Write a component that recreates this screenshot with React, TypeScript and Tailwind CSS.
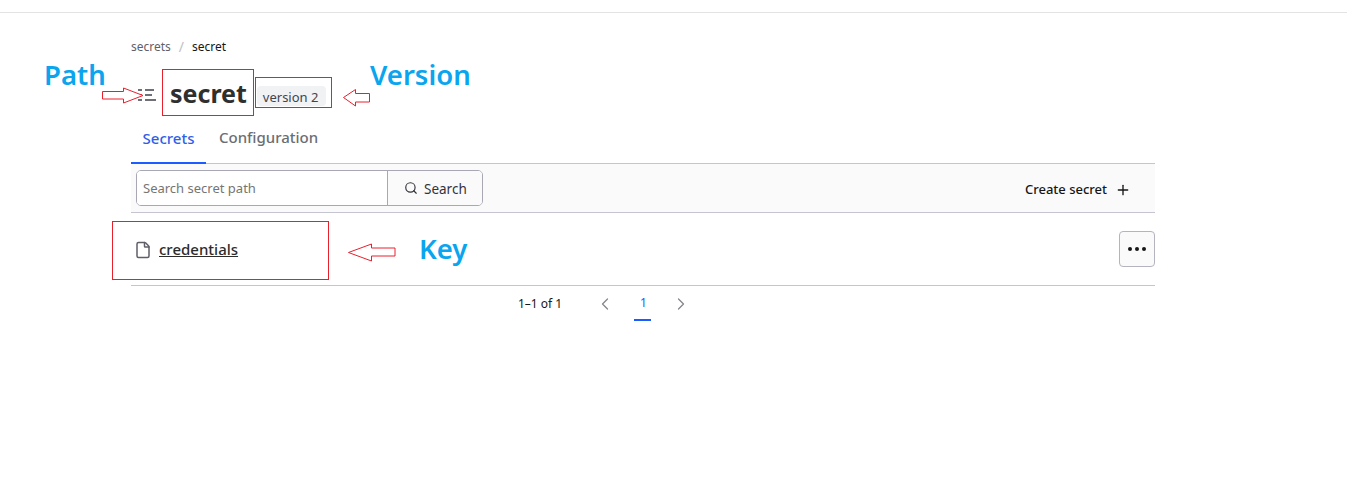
import { ChevronLeft, ChevronRight, File, Plus, Search } from "lucide-react";

const Arrow = ({ className, points, w, h }: { className: string; points: string; w: number; h: number }) => (
  <svg className={`absolute ${className}`} width={w} height={h} viewBox={`0 0 ${w} ${h}`}>
    <polygon points={points} fill="#fff" stroke="#e8202c" strokeWidth="1" />
  </svg>
);

const PathIcon = () => (
  <svg className="mt-[4px]" width="18" height="14" viewBox="0 0 18 14" fill="none" stroke="#6f6f78" strokeWidth="2">
    <path d="M0 2h4M0 7h4M0 12h4M7 2h9M7 7h7M7 12h11" />
  </svg>
);

const App = () => {
  return (
    <div className="relative h-[503px] overflow-hidden bg-white font-['Noto_Sans',sans-serif] text-[#2c2c2c]">
      <div className="h-[13px] border-b border-[#e3e3e3]" />

      <main className="ml-[131px] w-[1024px]">
        <nav className="mt-[24px] flex h-[20px] items-center gap-[8px] text-[12px] leading-none">
          <span className="text-[#5f5f68]">secrets</span>
          <span className="text-[14px] text-[#c0c0c8]">/</span>
          <span className="text-[#161616]">secret</span>
        </nav>

        <div className="mt-[12px] flex h-[48px] items-center pl-[7px]">
          <PathIcon />
          <h1 className="ml-[14px] text-[25px] leading-none font-bold text-[#2f2f2f]">secret</h1>
          <span className="mt-[6px] ml-[10px] flex h-5 w-[69px] items-center rounded-sm bg-[#f1f2f4] pt-[3px] pl-[6px] text-[13px] text-[#44444c]">
            version 2
          </span>
        </div>

        <div className="flex h-[47px] border-b border-[#c5c5d2] text-[15px] font-medium">
          <div className="-mb-px flex w-[75px] items-center justify-center border-b-2 border-[#1a5cff] pb-[2px] text-[#2f5fe8]">
            Secrets
          </div>
          <div className="flex items-center pb-[6px] pl-[13px] text-[#6a6e73]">Configuration</div>
        </div>

        <div className="flex h-[49px] items-center justify-between border-b border-[#c5c5d2] bg-[#fafafa] pl-[5px]">
          <div className="flex h-[36px] overflow-hidden rounded-[5px] border border-[#a8a8b4]">
            <div className="flex w-[250px] items-center bg-white pt-[2px] pl-[6px] text-[13px] text-[#757575]">
              Search secret path
            </div>
            <div className="flex w-[95px] items-center gap-[6px] border-l border-[#a8a8b4] bg-[#fafafa] pl-4 text-[13.5px] text-[#33333a]">
              <Search size={14} strokeWidth={2} />
              <span className="pt-[2px]">Search</span>
            </div>
          </div>
          <div className="flex items-center gap-[8px] pr-[24px] text-[13px] font-medium text-[#161616]">
            <span className="pt-[3px]">Create secret</span>
            <Plus size={16} strokeWidth={2} className="mt-[3px]" />
          </div>
        </div>

        <div className="flex h-[73px] items-center justify-between border-b border-[#c5c5d2] pl-[3px]">
          <div className="flex items-center gap-[7px]">
            <File size={18} className="mt-[2px] text-[#5f5f69]" strokeWidth={2} />
            <a className="text-[15px] font-medium underline">credentials</a>
          </div>
          <button className="flex h-9 w-9 items-center justify-center gap-[3px] rounded-[4px] border border-[#b4b4c0] bg-[#fafafa]">
            <span className="size-[4px] rounded-full bg-[#161616]" />
            <span className="size-[4px] rounded-full bg-[#161616]" />
            <span className="size-[4px] rounded-full bg-[#161616]" />
          </button>
        </div>

        <div className="flex h-[35px] items-center pl-[387px] text-[12px] text-[#161616]">
          <span className="w-[77px]">1–1 of 1</span>
          <ChevronLeft size={20} strokeWidth={1.5} className="text-[#85858d]" />
          <span className="ml-[19px] flex h-[35px] w-[17px] items-center justify-center border-b-2 border-[#1a5cff] pl-[2px] text-[#1a5cff]">
            1
          </span>
          <ChevronRight size={20} strokeWidth={1.5} className="ml-[20px] text-[#85858d]" />
        </div>
      </main>

      {/* annotations drawn on top of the screenshot */}
      <span className="absolute top-[56px] left-[44px] text-[27.5px] leading-[38px] font-semibold text-[#0aa5ee]">Path</span>
      <span className="absolute top-[56px] left-[370px] text-[27.5px] leading-[38px] font-semibold text-[#0aa5ee]">Version</span>
      <span className="absolute top-[230px] left-[419px] text-[27.5px] leading-[38px] font-semibold text-[#0aa5ee]">Key</span>

      <div className="absolute top-[69px] left-[162px] h-[47px] w-[92px] border border-[#e8202c]" />
      <div className="absolute top-[77px] left-[255px] h-[31px] w-[77px] border border-[#e8202c]" />
      <div className="absolute top-[221px] left-[112px] h-[59px] w-[217px] border border-[#e8202c]" />

      <Arrow className="top-[87px] left-[102px]" w={42} h={17} points="0.5,4.5 21.5,4.5 21.5,1 41,8.5 21.5,16 21.5,12 0.5,12" />
      <Arrow className="top-[89px] left-[343px]" w={27} h={18} points="26.5,4.5 12.5,4.5 12.5,0.5 0.5,8.5 12.5,17 12.5,13 26.5,13" />
      <Arrow className="top-[243px] left-[348px]" w={48} h={19} points="47,5 23.5,5 23.5,1 0.5,9.5 23.5,18 23.5,13 47,13" />
    </div>
  );
};

export default App;
